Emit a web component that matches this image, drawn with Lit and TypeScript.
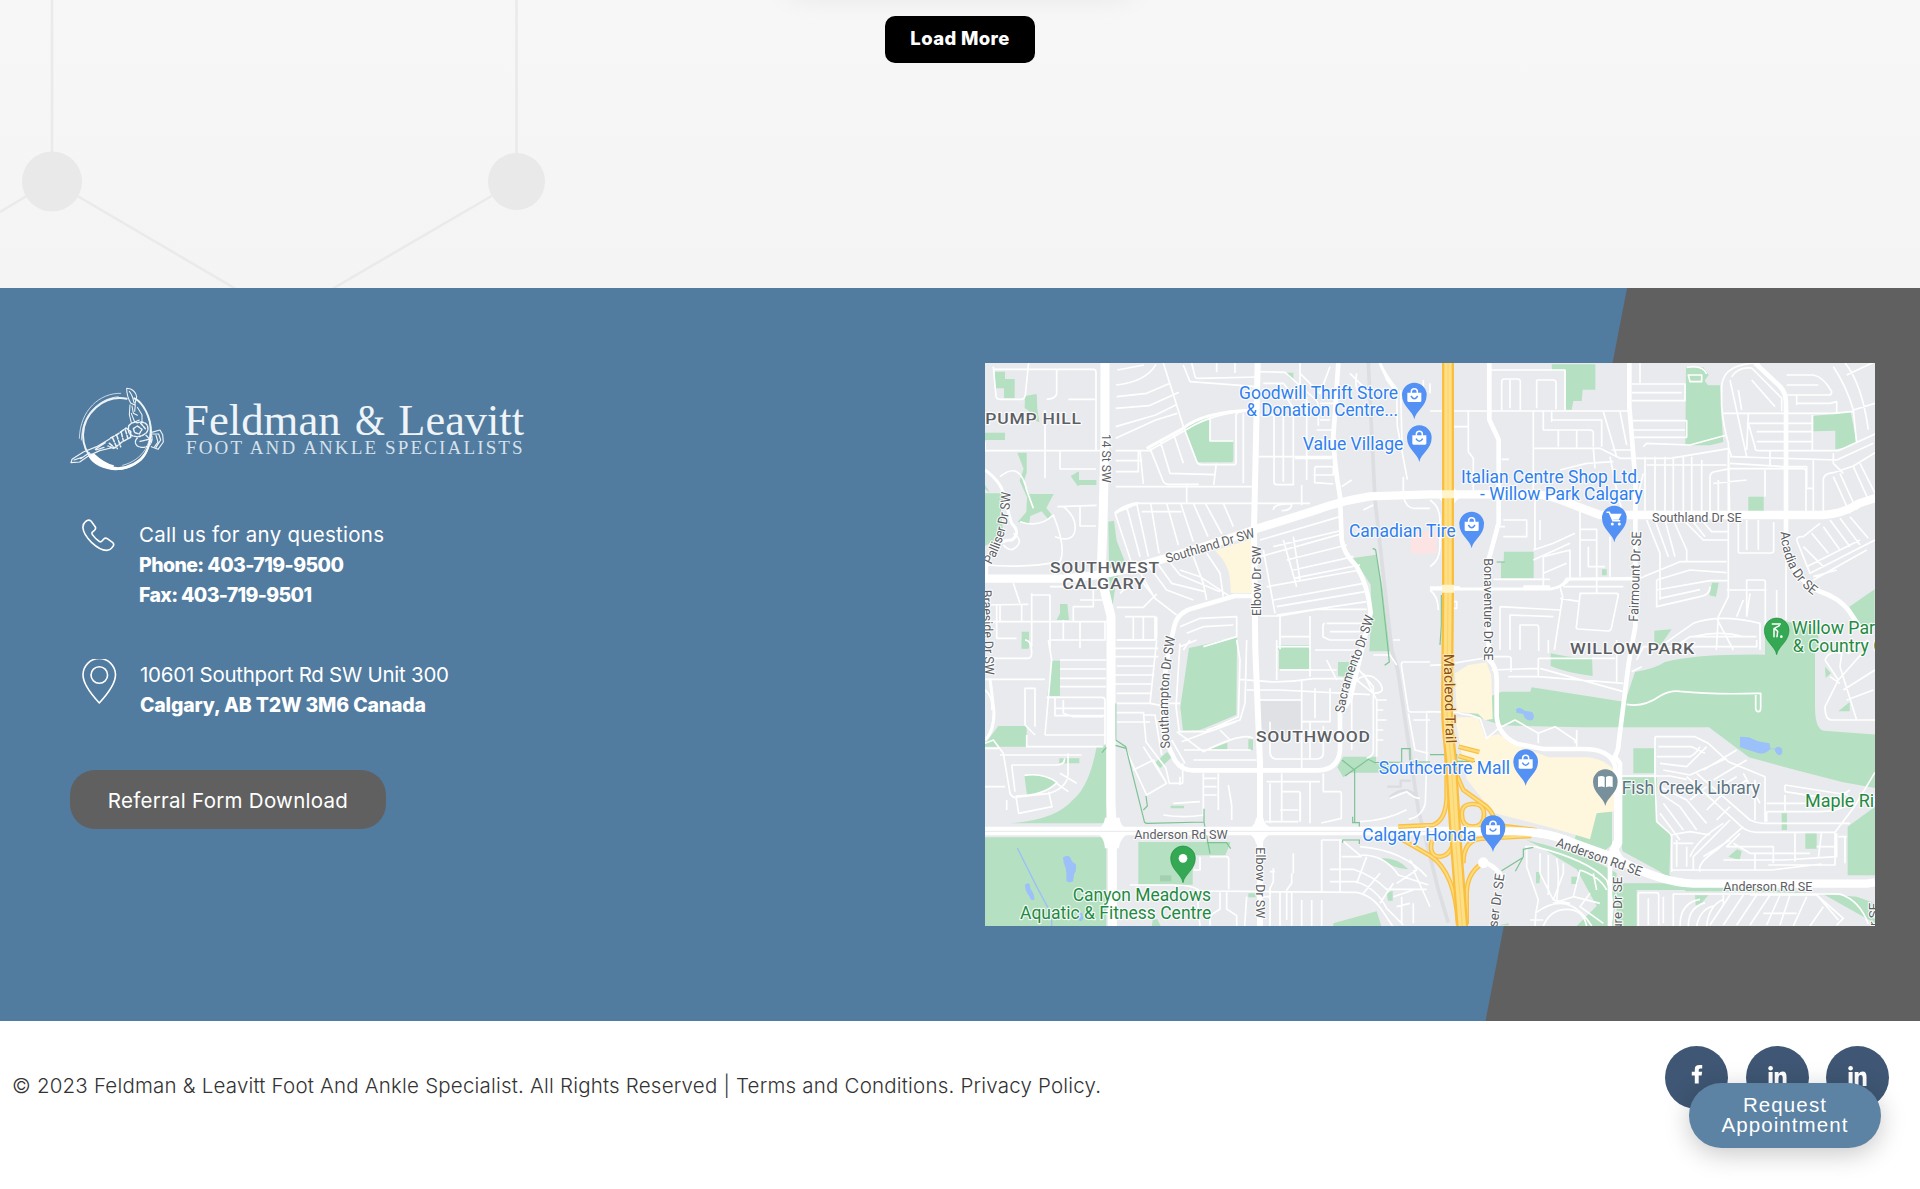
import { LitElement, html, svg, css, nothing } from "lit";
import { customElement, property } from "lit/decorators.js";

/** One line of text whose tracking is adjusted so that it spans a given width. */
@customElement("fitted-line")
class FittedLine extends LitElement {
  @property({ type: Number }) span = 0;
  @property() text = "";

  static styles = css`
    :host { display: block; white-space: nowrap; }
    .line { display: inline-block; }
  `;

  updated() {
    const line = this.renderRoot.querySelector<HTMLElement>(".line")!;
    line.style.letterSpacing = "0px";
    const natural = line.getBoundingClientRect().width;
    const step = (this.span - natural) / Math.max(1, this.text.length - 1);
    line.style.letterSpacing = `${step.toFixed(3)}px`;
  }

  render() {
    return html`<span class="line">${this.text}</span>`;
  }
}

type Label = { t: string; x: number; y: number; w?: number; r?: number; end?: boolean };

const shops: Label[] = [
  { t: "Goodwill Thrift Store", x: 777, y: 116, w: 477 },
  { t: "& Donation Centre...", x: 799, y: 169, w: 455 },
  { t: "Value Village", x: 968, y: 271, w: 302 },
  { t: "Canadian Tire", x: 1107, y: 530, w: 320 },
  { t: "Italian Centre Shop Ltd.", x: 1443, y: 368, w: 542 },
  { t: "- Willow Park Calgary", x: 1500, y: 421, w: 488 },
  { t: "Southcentre Mall", x: 1196, y: 1243, w: 394 },
  { t: "Calgary Honda", x: 1147, y: 1442, w: 342 },
];
const parks: Label[] = [
  { t: "Willow Par", x: 2436, y: 823, w: 249 },
  { t: "& Country C", x: 2438, y: 876, w: 276 },
  { t: "Maple Rid", x: 2475, y: 1340, w: 238 },
  { t: "Canyon Meadows", x: 278, y: 1622, w: 415 },
  { t: "Aquatic & Fitness Centre", x: 120, y: 1676, w: 574 },
];
const areas: Label[] = [
  { t: "PUMP HILL", x: 16, y: 192, w: 289 },
  { t: "SOUTHWEST", x: 210, y: 639, w: 330 },
  { t: "CALGARY", x: 247, y: 687, w: 250 },
  { t: "WILLOW PARK", x: 1770, y: 882, w: 375 },
  { t: "SOUTHWOOD", x: 828, y: 1146, w: 344 },
];
const streets: Label[] = [
  { t: "Southland Dr SE", x: 2016, y: 487, w: 269 },
  { t: "Anderson Rd SW", x: 463, y: 1438, w: 280 },
  { t: "Anderson Rd SE", x: 2230, y: 1593, w: 267 },
  { t: "Anderson Rd SE", x: 1726, y: 1459, w: 270, r: 19.5 },
  { t: "Southland Dr SW", x: 562, y: 609, w: 276, r: -16.5 },
  { t: "14 St SW", x: 366, y: 222, w: 146, r: 90 },
  { t: "Elbow Dr SW", x: 842, y: 768, w: 210, r: -90 },
  { t: "Elbow Dr SW", x: 829, y: 1462, w: 213, r: 90 },
  { t: "Fairmount Dr SE", x: 1974, y: 785, w: 270, r: -88 },
  { t: "Bonaventure Dr SE", x: 1512, y: 595, w: 307, r: 90 },
  { t: "Braeside Dr SW", x: 6, y: 690, w: 255, r: 88 },
  { t: "Palliser Dr SE", x: 1574, y: 1543, r: -82, end: true },
  { t: "Bonaventure Dr SE", x: 1926, y: 1550, r: -90, end: true },
  { t: "Dr SE", x: 2694, y: 1628, r: -90, end: true },
];

const greensNW = `M45 35h30v22h29v58h-32v-30h-27z M135 108l35-6 2 45 6 40-12-5-20-30-12-8z M15 218h60v22h-60z
 M112 278h28v60l-10 30 18 34h73l-22 42 16 20-12 12-18-22-34 14-4 24-34-6 26-30 2-44-22-50 12-36z
 M272 348l25-14v26h52v15h-50l-6 3z M15 375l14 22-14-10z M15 400h58l-10 50 6 60-20 30-34 18z
 M385 485l17-3 8 60 26 66-28 54-10 75-10-50z M612 205q35-30 78-38v75h70v58q0 7-7 7h-98q-7 0-8-8z
 M915 38h25v24l-14-10z M240 732h22l5 48h-37l10-20z M125 815h22v50h-22z M630 870l30-12 110-28v40z
 M895 855h98v15h-98z M1120 594l68-10 20 100 22 190h-62l6-120-2-80z`;
const greensNE = `M365 13h131v76h-38l-3 34h-25l-5 26h-17v-118h-42z M768 22h52l16 22-12 18 10 14 36 0 4 90 6 80-40 10h-74z
 M1150 168l112-12 18 92-24 12-40 8v-56l-66 2z M955 410h46v43h-46z M222 575h89v80h-98v-48l8 0z M516 628h14v18h-14z
 M846 668h20l-8 42-20-4z M673 812l52-4-40 56-12-20z M1258 740l76-52v110h-50z M1005 800l30-20 130 20v70h-160z`;
const greensSW = `M125 0h20v26h-20z M215 62h25v106h-38z M55 258h85v62h-125v-8z M897 16h94v71h-94z M1172 5l50-10 5 35h-35z
 M1074 66h60l-20 46-40-4z M627 24q70-14 100-24h44l-2 224q-60 26-110 46l-50 2-8-70z M805 298h14v32h-14z M690 328l52-20v20z
 M525 368l36-32 14 16-34 32z M133 406q60-8 98 22-40 34-90 36z M350 320l28-4v234h-290q140-10 190-70 50-40 72-160z
 M572 497h40v8h-40z M15 592h364v266h-364z M475 606h163v128h-163z M638 606h114l-16 40h-98z
 M1090 350h98v22h50v26h-130l-18 14-18-30z M1205 654q50 0 80 34-50-2-80-34z M1060 850l130-36 14 44h-144z M1220 760l18-8v30h-14z
 M805 760h22v12h-22z M518 838l14 0 10 20h-26z M238 355h60v15h-60z`;
const greensSE = `M362 40q60 15 124 12l2 56q-80-10-126-30z M215 155h86l4-13 90 14 190 30 30-90q60-10 90-30 90-24 300-22v-44h150v200q0 66 26 72l156 12v160l-100-18-140-36-140-38-120-90-380 0-240-6q-70-20-126-50z
 M610 325h62v75h-62z M570 412h110v130l42 42-4 120 40 28 300 0-60 22h-230l-80-60-110-60-20-100z M456 520l90-6v100l-30 24-82-40z
 M1253 560l82-60v206h-82z M1055 520h16v50h-16z M1126 580h34v46h-34z M895 650l26-22 14 6-6 26z
 M290 600q200 50 270 100l-10 158h-110l60-60-60-110-110-68z M424 710h20v22h-20z M318 696h14l-4 34h-10z M560 730l60 8 0 120h-60z
 M570 730h230l480 40 55 20v60l-160-90-380-10h-225z M795 766h40l-26 30h-12z M1185 80l18 20-16 14z M1225 214l34-28v28z M206 856h30v-6z`;

const minorNW = `M40 20l8 90q2 8 12 8h64q10 0 12-14l10-95 M40 28h300q8 0 8 8v235 M15 272H360 M230 30v70q0 16-30 18 M195 150v205 M265 118h80 M240 272v55h108
 M15 245v30M232 440l118-4 M250 440q40 30 35 70t-60 20 M120 485q60 20 100-20 40 100 20 140-100 20-225 10 M100 520q30 20 10 40t-40-6M60 350q60-50 80 40l20 55M300 438v60h48
 M410 110l90-10 70-30 M408 75q90-10 120-62 M412 30l80-15 M407 145l100-8 90-40 M407 200l120-35 60-30 M407 235l120-55 65-20 M407 272h100l115-65q80-50 200-55 M407 302h80M407 335h68v-62 M480 272l10 100M510 265l40 100q6 8 16 8h90
 M550 9l60 190 40 105q4 10 16 10h96q6 0 6-8V165q4-10 14-8 M540 240l30 100 135 4 4-34 M705 345l-4 30 M580 220l30 90 M635 9l10 40q0 6 10 6l180-4 M610 15l20 50 200 15 M690 167v76h70M765 9v30M710 9v28
 M835 35l80 2 90 80q10 10 10 20v60 M850 70h60l40 50 M870 110l50 4 20 30v230h-50q-8 0-8-8V165h-40 M910 165v200M980 110v250 M960 40l60 60 30-80 M835 290H1060M945 295h110 M1000 345h60v-25h-50q-6 0-6 8v40l56 4 M1010 210h48v30h-48M1050 180h-30 M1020 130h40M1110 40l60 60M1085 380l30-20
 M405 460l70-30h345 M405 460l50 150M440 440l40 150 M470 430l35 160 M512 430l25 150 M560 430l35 125 M602 430l38 115 M640 430l44 100 M676 430l50 92 M730 430l30 70 M485 455h120M620 370v60 M407 380h415M820 430h170M880 450q0-20 55-18 0 20-30 20M965 375v60M790 160v210
 M470 620l55 95 65 50 M500 610l60 80 80 30 M525 600l50 70 100 25 M560 595l40 50 120 50 M600 630l60 20 90 60 M640 590l30 80 10 50 M680 580l40 60 10 70 M420 700l40-40 30 10 40 50M410 742h80l40-40 M435 770h90v70M460 770v70M490 770v70 M410 840h110q10 0 10-10v-60
 M840 540l240-70 M880 560l210-50 M840 590l250-70 M920 600l180-45 M940 630l180-40 M860 680l280-50 M940 655l200-40 M880 720l270-50 M890 740l265-45 M890 765l270-40 M850 570l35 190M910 540l40 140M940 530l20 130
 M840 768h60l110-20 150 0 M1040 790h130M1035 790q-6 0-6 10v30l20 10h90M1050 815h90 M900 830h90M990 768v100M900 768v100M960 9v80M1130 40q-10 60 20 60M1005 870h130
 M600 800l60-25 110-5v60l-100 30 M620 820l50-20 90-5 M15 785H380M15 735l130-2 M125 735v50M155 700v160M155 705h55v160M210 680h170v40h-80M340 680v60h-60v45M300 785v80M210 840h165v-55 M250 780v60 M60 735v50M100 670l20 60M50 735v100h60
 M610 870l20-30 M1200 9l20 50 30 40 2 100 30 160 M1330 60v50M1262 90l4 160 M1270 350v60q10 40 40 35h40M1150 450l30-15`;
const minorNE = `M180 30h225v120 M0 153h600 M215 150V65q0-8 8-8h40q8 0 8 8v85 M240 60v85M320 60v85M320 60h50q8 0 8 8v80 M0 70v30M115 155v120l15 20v100 M65 200h50M215 298h22
 M310 155v260 M340 155v55h140q10 0 10 10v40 M365 180h150v80 M365 155v30 M310 265h200l60 30h150l180-30 M520 155l40 135 M385 210v50M440 210v55M490 265l5 60M540 290l20 100 20 80M570 155l20 100M545 270h65
 M605 72h160v50h-160 M605 182h165v50h-160M605 210h160M605 98h150M630 9v60M770 22q50-8 60 20 M775 45h40v20h-35z
 M640 260l10-10 130 5 110-30M650 315h240 M645 290v180M675 290v175M705 290v175M730 290v175M760 290v175M785 290v175M815 300v165 M640 340l-15 60M840 465V350q0-10 10-14l50-10h220q8 0 8 8v130 M865 360v100M850 370l100-10M895 280v185M895 260l10 30M1005 330v80
 M990 9q-110 0-115 70v60q5 60 20 110l4 210 M905 50q20-30 60-26l90 90v40M900 60l50 230 M925 90l10 60M965 60l70 80 M880 160h330l60-6M950 190h200M955 160l-5 110M955 190l20 70q0 12 10 12h240l110-50 M980 215h170M980 245h170M1065 272v-80M1147 165v105 M900 290l320 10 110-50 M900 310l160 10h70v60M1130 385h20M1150 300v160M1210 280v30l30 30 M1020 272v50
 M1070 45h80q30 5 55 50 0 10-10 10h-125 M1070 75h95M1100 130h100l20-5v35 M1100 105v30M1210 20q40 60 60 130l10 100 M1245 9q50 60 70 200M1250 45l85-40M1270 150l65-20 M1180 460V360q0-20 30-22l60-20 65-40 M1210 350l50 110M1230 340l50 110M1270 320l50 110M1290 310l45 90
 M650 480l40 100 0 140 M675 480l40 110M705 480l30 110M730 480l40 90v35 M760 480l60 60h75 M785 480l40 50M815 480l30 35h50 M895 470v240l-30 60-6 100 M925 490v85q0 4 8 4h90q8 0 8-8v-85M950 480v90M985 480v90 M640 650l110-45h140 M680 660l100-30 110 8 M680 690l160-28h55 M680 660v80l130-30q30-6 30-30 M690 715l120-26
 M950 770v-110h50q6 0 6 6v130 M890 690h120 M1068 490v290M1040 690v100M1100 540q0-12 20-10l50-40 M1100 540l40 100 195-100M1130 620l160-80M1150 660l160-90M1200 480l60 80M1230 475l60 80M1260 470l55 65M1120 560l60 60 M1145 520l50 60M1180 500l50 70M1150 650l70-20
 M690 860l100-70q80-30 200 0v80 M790 830q80-20 150 0M720 870l60-40h200 M860 775l50 95M940 720l-20 50M960 700l-10 70
 M0 687h360q40-4 60-30l220-5 M310 570l60-20 65-30 M310 600l110-50 M340 590l80-20v90 M340 640l70-30M340 590v90M315 420v150 M450 440v210M450 508h50v150 M500 540h-50M475 560v60h50M540 530v120M190 658h170 M450 700h110q6 0 4 10l-20 95q-2 8-10 8l-90-6q-8-2-4-12l10-90z M500 655v45
 M390 680l8 30-25 160 M210 740l180 10 M210 740v130 M240 870v-105l130 5 M270 870v-75h50q6 0 6 8v70 M390 715l60 10M400 680h180 M330 480v60M220 480h70v50h-70M390 330l80-20 80-5 M420 845l30 0M195 500h30
 M0 420q30 20 30 60v80q0 40-30 60M0 690q25 20 25 60 M55 725h25v20h-25`;
const minorSW = `M15 118h180M135 0q20 0 20 40 0 15-12 15H15 M205 0l10 60-20 225 M240 60h138M240 87h138M240 115h138M240 140h138M200 172h165q10 0 10 10v130 M225 205h150M225 172v55h150M195 285h180M250 180v40l30 10h90 M165 260v-115h-30v110l30 30 M15 150q24 20 20 60M15 310l25-10 30 40 20 120q4 10 14 12l105-12q60-20 55-70v-50 M60 345h245M140 285v35h230M15 325h40
 M95 375h135q24 0 24-20 M95 375l10 80 M133 406q60-8 98 22-40 40-124 40 M108 470l8 50 100-20-10-45M15 440h60M230 430l35 25M240 400l50 30M80 480v30
 M410 0h120M405 25h130M405 50h130M410 78h110M405 105h118 M405 132h110M410 160h105 M410 190h105M410 218h80M410 246h100 M530 0l-20 190 50 10 M490 215l8 90 60 80 10 45 40 0 0-60 M490 225h35l20 120 M440 335l60 130 60-35-70-110 M460 390l60-30 40 70
 M600 10l-12 190 10 75 90 0 80-30M590 275l80 60q120-60 150-40 M770 0l10 60-5 170-100 45 M800 0l-5 190-15 50-100 30 M565 190h35M612 330l200 0M605 305l80-30M640 360h190M575 300l40 70M720 270l30 30M650 0l-50 20
 M780 118l100 8q60 0 120-10l90 0 M800 150h100l270 14 M890 20v100M890 0v20h100v90M900 90h170 M835 180h130v150M965 120v265 M1005 145v90M1050 145v100h-85M870 245v90q0 20 20 22h120q20 0 20-20v-80M990 245v110 M1040 60l30 60M1120 70l60 70v190q0 20-20 24 M1115 130v200M1150 100l40 80v170M1130 120q40-30 70 10 20 30-20 30z M1180 45h50l20 30M1190 180h30M1190 210h20M1190 240h30M1190 270h20M1190 300h20
 M860 425h160M905 400v145M870 430v120M960 455v90 M905 455h50q6 0 6 6v80 M990 425v125M1030 400v55h50q4 0 4 10v70l-60 14 M900 510h55M855 545h100
 M670 400v130M715 400v110M670 415h40M670 440h40M670 465h40 M550 525q60 10 120 0 M580 490l80-5M600 410v25M755 540v-45l-10-60
 M690 650h50q6 0 6 8v90 M640 690h20v-40M450 735h130q60 0 80 18l460 4 M650 750l10 108M740 757v50l30 20v30M720 757v50l-30 20v30M800 770l-6 88M840 770h30v90 M900 757v100M935 757v100 M965 780v78M995 780v78M1025 780v78 M880 685v40l-10 20v90M870 695h15M935 700v30l-15 20v90M940 640v60
 M1025 600v155M1050 600h-20M1080 600v155 M1025 600h60l60 50 M1140 620q130 10 200 90 M1145 645q70 0 110 60l90 30 M1050 688h70q60 20 100 60l120 0 M1050 725h80q60 20 90 80l50 50 M1060 757h70q50 10 80 60l30 45 M1160 650l-30 80M1200 700l-50 60M1240 730l-40 60 M1290 790l-40 10M1265 770v80M1300 790v60 M1085 650h60
 M1290 660l20 30-60 40M1240 770l60-20M1300 690l50 110
 M1240 0h20M1350 66h-80q-6 0-6 10l20 130q0 10 10 10h60M1285 220l20 110 40 10M1300 240h50M1340 220v150l-4 120q-10 40-50 48 M1140 545q80-4 140-36 M1230 475l50-20q20 20 40 20`;
const minorSE = `M-10 215l90 2q20 8 40 8l30 10 20 60 36-30 M0 76l45-2 120-20 M185 50h50q8 0 8 6v40M185 90l140-5 0-30M235 110h90M325 60v50l255 20M330 85l250 70M355 0v40M560 0v125M325 55h230M620 60l20-40 340 0v-20M605 95l30-15
 M590 193q50 10 100-25 30-18 60-14 100 10 230 6h12v45q0 10-7 10t-8-10v-40 M215 260l40-20 70 40 50-20 60 40 0 10M325 280v30M440 270v50
 M560 408h160l50 10M675 290h120q20 10 40 20l60 55 110 45v135 M675 290v115l5 140 45 40v110 M685 320h100l40 20M680 350h100q20-10 30-30 M690 370l80 10 60-60M700 390l80 15 110-50 M690 440l80 40 60 70M690 460l60 40 50 70M700 490l60 80M690 520l60 80 M770 410l170 155q20 12 40 12h235l60-80 60-100M800 400l160 140q20 10 40 10h260 M820 390l100-60M850 420l100-60M870 440l50-30M890 460l60-40M780 480l50-40M830 510l50-50M860 540l40-40M975 420v120M940 400l50 90
 M1010 515h160q60 0 100-30 M1065 515v-50M1095 575v90M1010 545v-30M1010 490h190l60-40M1065 435l190 30M1065 435v20M1065 455l130 20
 M940 560l-80 70q-60 40-50 65 M900 600l-80 50M930 580l-40 40h140v50 M725 690h300l150-18M740 600v80M770 620v60M780 650q20-50 100-100M790 690v-40l110-110M720 585l60-10 60 10M730 610h60M975 640v50M910 610l50 30h180M880 660h180l160-10v-70M1215 575v100h-200M1245 590v80 M1225 590h25M1160 620h60M1175 575l-10 80
 M285 620h30q160 40 215 100 30 80 10 138 M290 620v60l35 100q-10 40-10 78M330 640v60l40 80M355 645v120M400 670v30l-30 80M380 655q10 50 0 130 M315 820q80-60 140 0 20 20 30 38M340 858q20-50 70-50t60 50M450 690l-20 80-60 20M450 690q60 20 80 60M430 770l80 20M480 760l-30 40 70 50M300 840h40M370 780l50 10M490 700l10 50
 M625 758h55q6 0 6 8v90M625 758v100M655 775v80M730 858v-96h500q60 20 85 90M750 858q0-70 60-80 M775 858q0-55 50-70M800 858q10-50 50-60M830 858q6-60 50-80M700 770v80M900 765l-60 90M940 765l-60 90 M980 765l-60 90M1020 765l-60 90 M880 765v30M960 765h200l80 70-20 20M1050 765l-40 90M1080 765l-30 90M1130 770l-40 88M1165 770l60 70M1180 800l-40 58M1000 820h100
 M1185 60q10-30 50-20l-5 40 50 160h55M1185 60l40 60-40 80q0 40 20 40h130 M1225 120l80-90M1240 150l95-60M1250 180l80-30M1235 0l20 40 60-40M1200 110l30 20`;

const ramps = `M1255 1400l105-5q38-15 40-85v-150 M1262 1436l90 52q74 50 82 205 M1356 1440q-12 50 26 50 36-6 40-60v-40
 M1400 1160q26 80 50 130l70 50q22 20 26 50 M1446 1366q-4-34 32-34t34 34-34 34-32-34z M1450 1510q0-70 54-74l150-8 M1560 1397l110 14
 M1504 1512q-44 30-44 90v90 M1436 1160l62 16M1436 1188l46 14`;

@customElement("location-map")
class LocationMap extends LitElement {
  static styles = css`
    :host { display: block; }
    .map { display: block; width: 890px; height: 563px; background: #e8eaed; }
    .park { fill: #b5e0c2; }
    .water { fill: #9cc0f9; }
    .mall { fill: #fef6dd; }
    .path { fill: none; stroke: #7cc293; stroke-width: 3.5; }
    .minor { fill: none; stroke: #fff; stroke-width: 5; stroke-linejoin: round; }
    .local { fill: none; stroke: #fff; stroke-width: 9; stroke-linejoin: round; }
    .medium { fill: none; stroke: #fff; stroke-width: 14; stroke-linejoin: round; }
    .major { fill: none; stroke: #fff; stroke-width: 25; stroke-linejoin: round; }
    .rail { fill: none; stroke: #dcdee1; stroke-width: 11; }
    .ramp { fill: none; stroke: #fbc043; stroke-width: 14; }
    .ramp-in { fill: none; stroke: #fddc80; stroke-width: 6; }
    .trail { fill: none; stroke: #fbbf40; stroke-width: 36; stroke-linejoin: round; }
    .trail-in { fill: none; stroke: #fddf85; stroke-width: 22; stroke-linejoin: round; }
    .trail-mid { fill: none; stroke: #fcd268; stroke-width: 3; }
    .txt { font-family: Roboto, "Liberation Sans", sans-serif; paint-order: stroke; stroke: #fff; stroke-linejoin: round; stroke-width: 7; stroke-opacity: 0.85; }
    .shop { font-size: 53px; fill: #2f7ff0; }
    .green { font-size: 53px; fill: #1f8a42; }
    .library { font-size: 53px; fill: #5d7481; }
    .area { font-size: 46px; font-weight: 500; fill: #5c6065; letter-spacing: 2px; }
    .street { font-size: 40px; fill: #5c6064; }
    .trail-name { font-size: 43px; fill: #8c4f16; stroke: #fde9b0; }
    .white { fill: #fff; }
    .white-line { fill: none; stroke: #fff; stroke-width: 4.5; stroke-linecap: round; }
  `;

  private labels(list: Label[], kind: string) {
    return list.map(
      (l) => svg`<text class="txt ${kind}" transform="translate(${l.x} ${l.y}) rotate(${l.r ?? 0})"
        text-anchor=${l.end ? "end" : "start"} textLength=${l.w ?? nothing} lengthAdjust="spacingAndGlyphs">${l.t}</text>`
    );
  }

  private pin(x: number, y: number, color: string, glyph: unknown, edge = "none") {
    return svg`<g transform="translate(${x} ${y})">
      <path fill=${color} stroke=${edge} stroke-width="2" d="M0 73C-4 48-37 34-37 0a37 37 0 0 1 74 0C37 34 4 48 0 73z"/>
      ${glyph}</g>`;
  }

  private bag() {
    return svg`<path class="white" d="M-21-7h42v24q0 4-4 4h-34q-4 0-4-4z"/>
      <path class="white-line" d="M-9-7v-3a9 9 0 0 1 18 0v3"/>
      <path d="M-10 3q10 16 20 0" fill="none" stroke="#5491f5" stroke-width="4.5"/>`;
  }

  render() {
    const blue = "#5491f5";
    return html`<svg class="map" viewBox="15 9 2670 1689" preserveAspectRatio="none">
      <path class="park" d=${greensNW} />
      <path class="park" d=${greensNE} transform="translate(1350 0)" />
      <path class="park" d=${greensSW} transform="translate(0 840)" />
      <path class="park" d=${greensSE} transform="translate(1350 840)" />
      <path class="mall" d="M705 572l110-35v162h-62l-2-25q0-60-46-102z" />
      <path class="mall" transform="translate(1350 840)" d="M75 100l40-25 55-8 14 40 4 130-24 4-20-20-64-5z M75 232l70 0 20 60 40-10 60 35 90 35h120q70 10 95 65v95l-70 8-20 78-100-30-190-50-80-100z" />
      <path d="M1292 515h78v66h-78z" fill="#fce4e4" />
      <path d="M835 1022h128v98h-128z" fill="#dfe1e5" />
      <path d="M540 1546h34v18h-34z" fill="#a4cfb0" />
      <path class="water" transform="translate(0 840)" d="M249 652q14-10 22 0 2 14 16 20 4 20-4 28l-4 24q-12 6-20-2 2-20-2-38-8-14-8-32z M135 734q8-8 14-2l2 14q14 16 12 34-12 2-14-10-14-16-14-36z M297 815q12 0 12 22-8 12-12 2z" />
      <path class="water" transform="translate(1350 840)" d="M258 208q12-10 26 4l22 4q10 10 2 24-14 4-24-6l-4-12-20-4z M930 290l26 2 28 12 34 6 4 16h12q10-12 22 0 4 18-8 20-12-4-14-18h-14q-14 16-34 12l-56-18z" />
      <path d="M112 1464q30 60 55 110l48 90v36" fill="none" stroke="#9cc0f9" stroke-width="4" />

      <path class="rail" d="M1165 9l20 410 50 450 18 60 62 420 60 240 30 99" />
      <path d="M1222 1280h40v-18h30M1228 1312q50-40 80-4" fill="none" stroke="#dadcdf" stroke-width="7" />

      <path class="minor" d=${minorNW} />
      <path class="minor" d=${minorNE} transform="translate(1350 0)" />
      <path class="minor" d=${minorSW} transform="translate(0 840)" />
      <path class="minor" d=${minorSE} transform="translate(1350 840)" />

      <path class="path" d="M1178 566q10 0 10 10l14 90 22 200 4 40-14 10 M407 1030v110l30 20 55 220q0 10 10 10l170-4v-40M672 1386l18 95M366 1178q10-20 40-22l35 10M490 1350l12-12-4-30 M1124 1390v-160l-38-30M1095 1248l70-50 20 10 80-2v-40l25 0v40l60 0 M1118 1370v18h20v12 M1088 1448v-8h50v12M680 1448h60l12 18M1384 705v90l-4 60M1350 1184h80v20l55 0M1565 1532l65-40M1606 1534l24-44v-22l30-6 M1550 606h24" />

      <path class="local" d="M15 330q55 40 60 90l20 70q30 30 0 50-50 0-75 60l0 50 M405 460q30-25 70-30 M30 955l12 100q0 60-27 85 M1630 680h80 M1440 683H1350 M1350 687h360q40-5 50-30h200 M500 265l110-60q60-50 210-55 M1200 9q10 30 50 80" />
      <path class="medium" d="M1075 9l-15 220q2 80 20 180l5 130q5 40 45 80 35 60 42 140l-62 260-30 40 0 110q-4 62-70 62H640q-40 0-58-36l-28-60q-20-150 30-340 10-40 60-52l120-35h60" />
      <path class="medium" d="M1528 9v170l28 60v250l-30 110 0 300 q24 20 24 60v110q4 55 60 82l80 16h120q80 0 95 50l4 40v250" />
      <path class="medium" d="M1948 9l0 130 18 220v440l-20 110-30 240q0 30-20 50" />
      <path class="medium" d="M2325 9l75 70q18 20 18 50v420q10 100 100 145 60 20 90 60l40 60 M1905 1190l15 20v240l-30 45v220" />
      <path d="M833 9l-11 500 4 361 14 340v490" fill="none" stroke="#fff" stroke-width="18" />
      <path d="M375 9v220l-6 260-6 160 30 120v560l4 90v290" fill="none" stroke="#fff" stroke-width="27" />
      <path class="major" d="M15 656H250q140-10 250-45 180-50 340-108l160-50q80-30 170-44l180-6h310q40 0 90 20l110 42h670q60-4 105-34l60-20" />
      <path class="major" d="M15 1413H1580q110 0 180 28l150 54q120 70 230 76h520l25-4" />
      <path d="M325 1413q45 0 50-40h44q2 40 60 40-58 4-62 52h-42q-4-50-50-52zM780 1413q45-6 48-40h22q4 34 60 40-60 6-62 40h-20q-4-34-48-40zM1350 404q40-6 44-36h22q8 36 50 36-40 6-50 40h-22q-6-34-44-40zM1880 1490l20-50 34 60z" fill="#fff" />
      <path d="M15 1414H1450" stroke="#e2e4e7" stroke-width="2.5" fill="none" />
      <path class="medium" d="M1510 1505q50 20 60 60" />

      <path class="ramp" d=${ramps} />
      <path class="ramp-in" d=${ramps} />
      <circle class="white" cx="1510" cy="1508" r="16" />
      <path d="M1455 1414h150q90 0 160 28" stroke="#fff" stroke-width="25" fill="none" />
      <path class="trail" d="M1404 9v690l-3 340q0 60 12 160l14 240 20 262" />
      <path class="trail-in" d="M1404 9v690l-3 340q0 60 12 160l14 240 20 262" />
      <path class="trail-mid" d="M1404 9v690l-3 340q0 60 12 160l14 240 20 262" />
      <path d="M1386 403h36M1386 686h36" stroke="#fff4cc" stroke-width="24" />

      ${this.labels(streets, "street")}
      <path id="palliser" d="M34 615Q92 510 92 380" fill="none" />
      <path id="southampton" d="M571 1164Q556 1020 575 900L588 812" fill="none" />
      <path id="sacramento" d="M1092 1060Q1108 960 1146 880L1190 750" fill="none" />
      <path id="acadia" d="M2402 515Q2408 640 2498 704L2520 720" fill="none" />
      <text class="txt street"><textPath href="#palliser" textLength="228" lengthAdjust="spacingAndGlyphs">Palliser Dr SW</textPath></text>
      <text class="txt street"><textPath href="#southampton" textLength="335" lengthAdjust="spacingAndGlyphs">Southampton Dr SW</textPath></text>
      <text class="txt street"><textPath href="#sacramento" textLength="303" lengthAdjust="spacingAndGlyphs">Sacramento Dr SW</textPath></text>
      <text class="txt street"><textPath href="#acadia" textLength="222" lengthAdjust="spacingAndGlyphs">Acadia Dr SE</textPath></text>
      ${this.labels([{ t: "Macleod Trail", x: 1391, y: 882, w: 268, r: 88.5 }], "trail-name")}
      ${this.labels(areas, "area")}
      ${this.labels(shops, "shop")}
      ${this.labels(parks, "green")}
      ${this.labels([{ t: "Fish Creek Library", x: 1925, y: 1303, w: 415 }], "library")}

      ${this.pin(1303, 105, blue, this.bag())}
      ${this.pin(1318, 233, blue, this.bag())}
      ${this.pin(1475, 492, blue, this.bag())}
      ${this.pin(1637, 1205, blue, this.bag())}
      ${this.pin(1539, 1403, blue, this.bag())}
      ${this.pin(1903, 474, blue, svg`<path class="white-line" d="M-22-17h7l11 25h20"/>
        <path class="white" d="M-14-13h36L13 5h-19z"/><circle class="white" cx="-6" cy="18" r="4.5"/><circle class="white" cx="15" cy="18" r="4.5"/>`)}
      ${this.pin(1876, 1265, "#78909c", svg`<path class="white" d="M-22-15q12-5 20 1v31q-8-5-20-1zM22-15q-12-5-20 1v31q8-5 20-1z"/>`)}
      ${this.pin(609, 1495, "#34a853", svg`<circle class="white" r="13"/>`, "#1e8e3e")}
      ${this.pin(2390, 811, "#34a853", svg`<path class="white-line" d="M-13-19h24M8-14L-7-6l10 9-2 16M-8-5v24"/><circle class="white" cx="14" cy="19" r="4"/>`, "#1e8e3e")}
    </svg>`;
  }
}

@customElement("practice-logo")
class PracticeLogo extends LitElement {
  static styles = css`
    :host { display: block; }
    .logo { display: block; width: 460px; height: 88px; overflow: visible; }
    .name { font-family: "Liberation Serif", serif; font-size: 136px; fill: #eef4f8; }
    .tag { font-family: "Liberation Serif", serif; font-size: 57px; fill: #d6e2ec; }
    .ink { fill: none; stroke: #eef4f8; stroke-linecap: round; stroke-linejoin: round; }
  `;
  render() {
    return html`<svg class="logo" viewBox="60 45 1380 264">
      <path class="ink" stroke-width="6" d="M230 86C160 74 100 130 99 195c0 60 45 100 105 102 60-2 98-50 99-110 0-46-24-90-50-102" />
      <path class="ink" stroke-width="3" opacity="0.75" d="M212 70C150 68 90 120 88 205M205 80C150 85 96 130 94 210M298 150c14 70-20 120-80 136" />
      <path d="M112 252q36 34 92 40 52-6 78-40 18-26 18-76 8 62-26 96-40 32-88 28-60-10-74-48z" fill="#fff" />
      <path d="M116 250l18 2q30 28 58 34l-4 10q-50-8-72-46z" fill="#fff" />
      <path class="ink" stroke-width="3.2" d="M230 55l12 2q16 8 18 24l-6 24-12-6q-12-20-12-44zM238 64q10 12 14 34M240 104l-2 30 6 24M262 112l14 22 0 24M246 108l4 22 12 6M256 104l-2 20M244 130l10 26 14-6" />
      <path class="ink" stroke-width="4.4" stroke-dasharray="9 4" d="M236 168q10-14 26-10 20-6 30 8 6 18-8 26-16 12-34 6-18-4-14-30zM250 176l12-8 14 10-8 14-14-4zM272 160l14 16" />
      <path class="ink" stroke-width="4" stroke-dasharray="14 4" d="M262 204q-12 12 0 24 20 10 38-4 10-14 4-30M270 214l26-6M288 196l14 14" />
      <path class="ink" stroke-width="4.6" stroke-dasharray="12 5" d="M182 204l22-12 24-18 14 10 0 18-26 14-24 20-18-8M188 204l14 32M200 196l12 34M214 188l6 24M226 180l8 26M178 220l14 12" />
      <path class="ink" stroke-width="3.4" d="M302 188l28-8 8 14 2 22-16 22-20-8M306 192l20 0 6 18-14 22M318 196l6 20-10 14" />
      <path class="ink" stroke-width="3.6" d="M180 206l-40 24-40 16-34 22-3 10 26-2 26-18 34-16 34-8M166 218l-30 20M72 270l24-8M92 266l26-18M138 240l24-8" />
      <text class="name" y="194">
        <tspan x="402" textLength="470" lengthAdjust="spacingAndGlyphs">Feldman</tspan>
        <tspan x="915" textLength="90" lengthAdjust="spacingAndGlyphs">&amp;</tspan>
        <tspan x="1045" textLength="377" lengthAdjust="spacingAndGlyphs">Leavitt</tspan>
      </text>
      <text class="tag" x="408" y="252" textLength="1010" lengthAdjust="spacing">FOOT AND ANKLE SPECIALISTS</text>
    </svg>`;
  }
}

@customElement("app-root")
class AppRoot extends LitElement {
  static styles = css`
    :host {
      display: flex; flex-direction: column; position: relative; width: 1920px; height: 1189px;
      overflow: hidden; background: #fff; font-family: Inter, "Open Sans", sans-serif; font-size: 20.5px; line-height: 30px;
    }
    .listing {
      position: relative; flex: none; display: flex; justify-content: center; align-items: flex-start;
      box-sizing: border-box; height: 288px; padding-top: 16px; overflow: hidden;
      background: linear-gradient(#f7f7f7, #f4f4f4);
    }
    .molecule { position: absolute; left: 0; top: 0; width: 640px; height: 288px; }
    .bond { stroke: #eaeaea; stroke-width: 2.6; fill: none; }
    .atom { fill: #e9e9e9; }
    .card-shadow { position: absolute; left: 790px; top: -44px; width: 340px; height: 38px; box-shadow: 0 0 30px rgba(0, 0, 0, 0.09); }
    .more {
      position: relative; display: flex; justify-content: center; box-sizing: border-box; width: 150px; height: 47px; padding: 7px 0 0;
      border: 0; border-radius: 10px; background: #000; color: #fff; font: 800 18.5px/30px Inter, sans-serif;
    }
    .contact {
      flex: none; display: grid; grid-template-columns: 915px 890px; box-sizing: border-box; height: 733px; padding: 75px 45px 0 70px;
      background: linear-gradient(100.93deg, #517b9f 0 1597px, #606060 1598px);
      color: #fff;
    }
    .details { padding-top: 22px; }
    .row { display: grid; grid-template-columns: 57px auto; padding-left: 12px; }
    .phone { margin-top: 46px; }
    .address { margin-top: 49px; grid-template-columns: 58px auto; }
    .lines { padding-top: 1px; }
    .strong { font-weight: 800; font-size: 19.5px; position: relative; top: -0.5px; }
    .icon { display: block; fill: none; stroke: #fff; stroke-linejoin: round; }
    .referral {
      display: flex; justify-content: center; box-sizing: border-box; width: 316px; height: 59px; margin-top: 50px; padding-top: 16px;
      border-radius: 25px; background: #606060;
    }
    .legal { flex: 1; display: flex; justify-content: space-between; align-items: flex-start; padding: 24.5px 31px 0 12px; color: #333; }
    .copyright { padding-top: 25px; font-weight: 300; }
    .social { display: flex; gap: 17.5px; }
    .disc { display: block; width: 63px; height: 63px; border-radius: 50%; background: #3f5774; }
    .disc-icon { display: block; width: 63px; height: 63px; fill: #fff; }
    .request {
      position: absolute; left: 1689px; top: 1083px; box-sizing: border-box; width: 192px; height: 65px; padding-top: 12px;
      display: flex; flex-direction: column; align-items: center; border-radius: 33px; background: #5c82a4; color: #fff;
      font: 400 20.5px/20px "Liberation Sans", Arial, sans-serif; box-shadow: 0 6px 26px rgba(0, 0, 0, 0.22);
    }
  `;

  private linkedin() {
    return html`<span class="disc"><svg class="disc-icon" viewBox="0 0 63 63">
      <circle cx="24.600" cy="22.300" r="2.300" /><path d="M22.600 26h4v14h-4zM28.700 26h3.800v2q1.500-2.400 4.200-2.400 3.800 0 3.800 5.300V40h-3.800v-7.900q0-3-1.900-3-2.300 0-2.300 3.200V40h-3.800z" />
    </svg></span>`;
  }

  render() {
    return html`
      <section class="listing">
        <svg class="molecule" viewBox="0 0 640 288">
          <path class="bond" d="M52 0v160M516.500 0v160M30 194L0 212M74 194l162 95M495 194l-163 95" />
          <circle class="atom" cx="52" cy="181.500" r="30" /><circle class="atom" cx="516.500" cy="181.500" r="28.500" />
        </svg>
        <div class="card-shadow"></div>
        <button class="more"><fitted-line span="99" text="Load More"></fitted-line></button>
      </section>
      <footer class="contact">
        <div class="details">
          <practice-logo></practice-logo>
          <div class="row phone">
            <svg class="icon" width="33" height="33" viewBox="0 0 33 33" stroke-width="1.600">
              <path d="M3.500 2.600Q6.500 0 9 2l4 5.400q1.500 2-.6 4l-2 1.700q-1 1.200.2 2.800 3 4.300 6.800 6.600 1.600.8 2.600-.5l1.800-2q1.600-1.600 3.500-.3l5.200 3.700q2.100 1.700.5 4-2.500 3.800-6.500 4-6.500 0-15-8Q1.300 15 .9 8.500.8 4.800 3.500 2.600z" />
            </svg>
            <div class="lines">
              <fitted-line span="245" text="Call us for any questions"></fitted-line>
              <fitted-line class="strong" span="205" text="Phone: 403-719-9500"></fitted-line>
              <fitted-line class="strong" span="173" text="Fax: 403-719-9501"></fitted-line>
            </div>
          </div>
          <div class="row address">
            <svg class="icon" width="35" height="46" viewBox="0 2.500 35 46" stroke-width="1.600">
              <path d="M17.300 45.500Q1 28 1 17.300a16.200 16.200 0 0 1 32.500 0Q33.500 28 17.300 45.500z" transform="translate(0 1)" /><circle cx="17.300" cy="18.500" r="8.300" />
            </svg>
            <div class="lines">
              <fitted-line span="309" text="10601 Southport Rd SW Unit 300"></fitted-line>
              <fitted-line class="strong" span="286" text="Calgary, AB T2W 3M6 Canada"></fitted-line>
            </div>
          </div>
          <div class="referral"><fitted-line span="240" text="Referral Form Download"></fitted-line></div>
        </div>
        <location-map></location-map>
      </footer>
      <div class="legal">
        <fitted-line class="copyright" span="1089" text="© 2023 Feldman &amp; Leavitt Foot And Ankle Specialist. All Rights Reserved | Terms and Conditions. Privacy Policy."></fitted-line>
        <div class="social">
          <span class="disc"><svg class="disc-icon" viewBox="0 0 63 63"><path d="M29.800 37.500V29.500h-3v-3.800h3v-2.500q0-4.200 4.600-4.200h2.800v3.600h-2q-1.500 0-1.500 1.500v1.600h3.400l-.5 3.800h-2.900v8z" /></svg></span>
          ${this.linkedin()}${this.linkedin()}
        </div>
      </div>
      <div class="request"><fitted-line span="83" text="Request"></fitted-line><fitted-line span="126" text="Appointment"></fitted-line></div>
    `;
  }
}
